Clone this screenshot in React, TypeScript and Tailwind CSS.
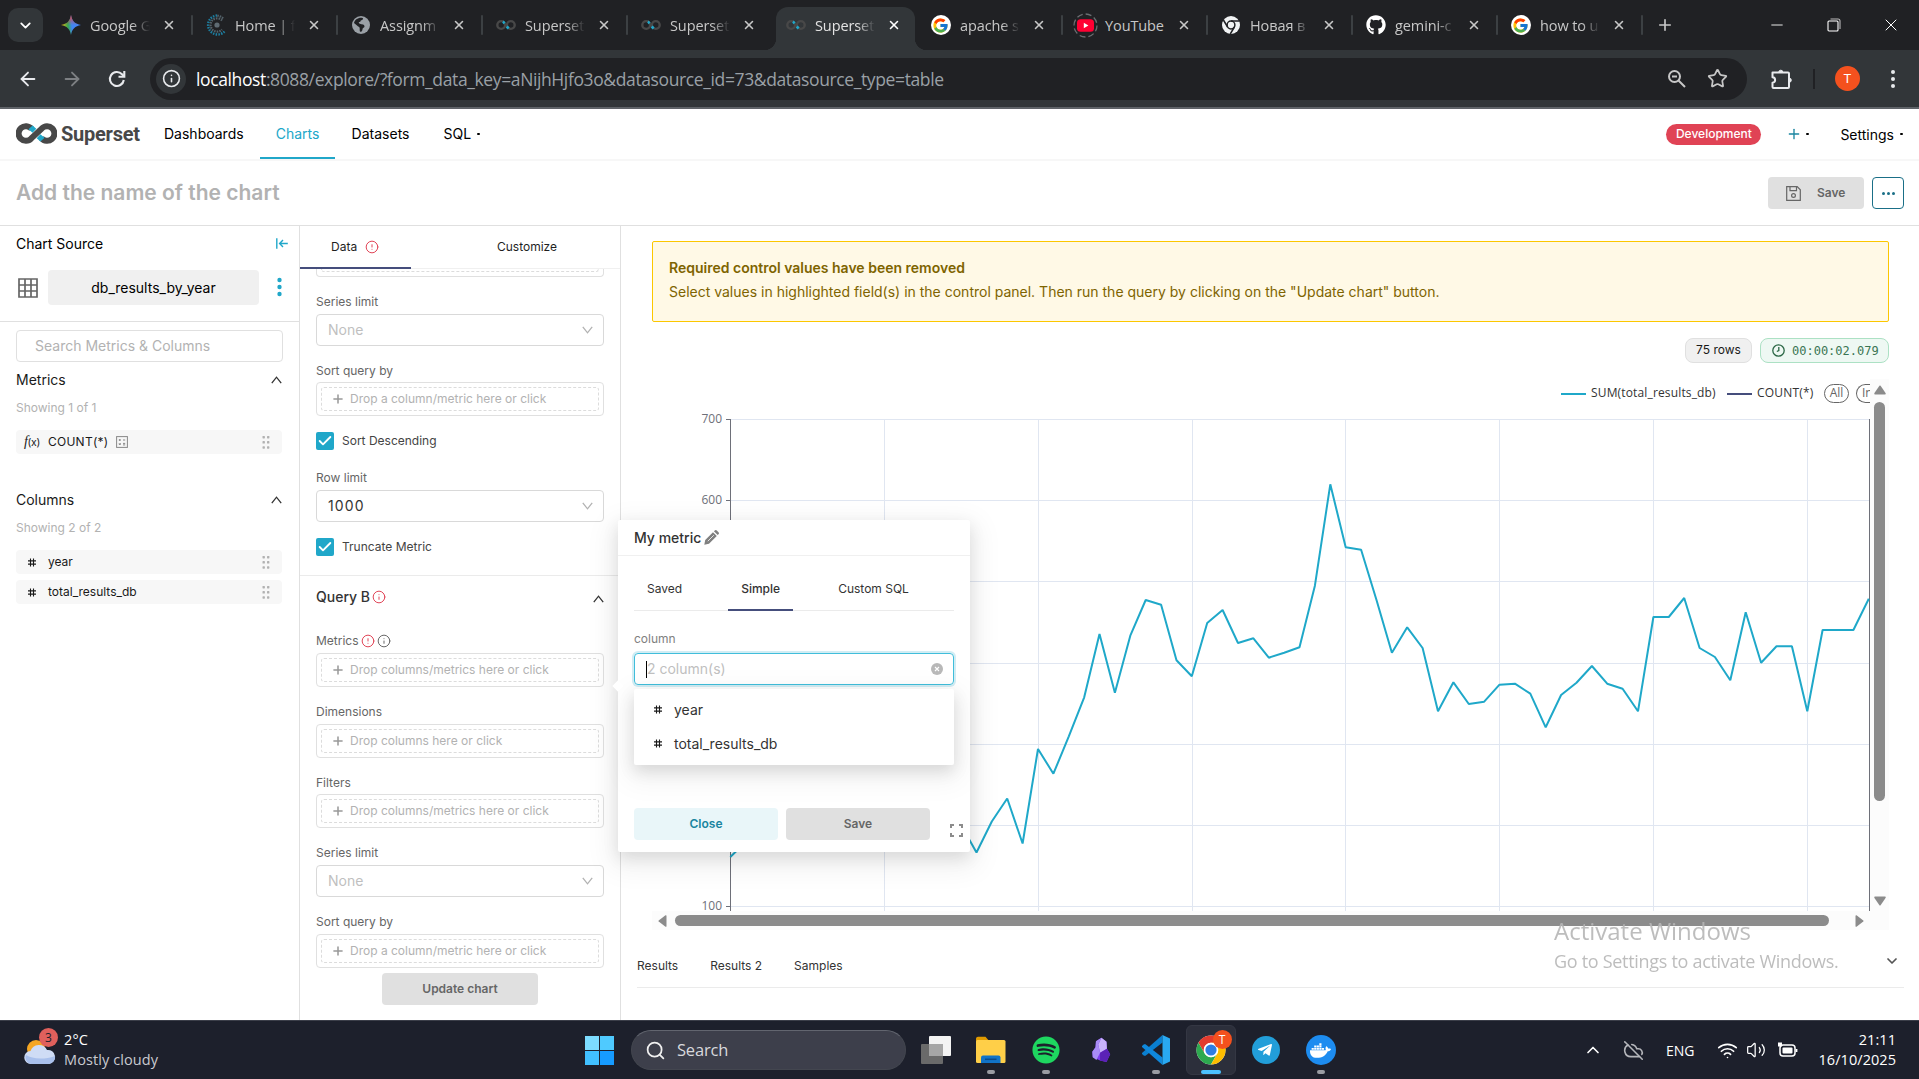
import React from "react";
import {
  ChevronDown,
  ChevronUp,
  ArrowLeft,
  ArrowRight,
  Info,
  X,
  Plus,
  Star,
  Minus,
  CircleAlert,
  CloudOff,
  Wifi,
  Volume2,
  Search,
  Check,
} from "lucide-react";
import { FcGoogle } from "react-icons/fc";
import { FaGithub, FaSpotify, FaDocker, FaTelegramPlane } from "react-icons/fa";

const SEGOE = "font-['Open_Sans','Noto_Sans',sans-serif]";

/* ---------- small drawings ---------- */

function SupersetMark() {
  return (
    <svg width="41" height="21" viewBox="0 0 41 21" fill="none" className="shrink-0">
      <path
        d="M15.6 5.9A7.3 7.3 0 1 0 15.3 15.4L25.7 5.6A7.3 7.3 0 1 1 25.4 15.1"
        stroke="#484848"
        strokeWidth="6"
      />
      <path d="M16.600 2.400 20.300 5.800 16.600 9.700 12.400 6.300ZM24.400 18.600 20.700 15.200 24.400 11.300 28.600 14.700Z" fill="#20a7c9" />
    </svg>
  );
}

function SupersetFavicon() {
  return (
    <svg width="20" height="12" viewBox="0 0 20 12" fill="none">
      <circle cx="5.2" cy="6" r="3.9" stroke="#484848" strokeWidth="2.4" />
      <circle cx="14.8" cy="6" r="3.9" stroke="#484848" strokeWidth="2.4" />
      <path d="M7.6 1.6 9.6 3.4 7.6 5.2 6.2 3.4ZM11.6 6.4 13.6 8.4 11.6 10.4 9.8 8.4Z" fill="#20a7c9" />
    </svg>
  );
}

function GeminiIcon() {
  return (
    <svg width="20" height="20" viewBox="0 0 20 20">
      <defs>
        <linearGradient id="gem" x1="0" y1="0.6" x2="1" y2="0.5">
          <stop offset="0" stopColor="#fbbc04" />
          <stop offset="0.35" stopColor="#34a853" />
          <stop offset="0.55" stopColor="#4285f4" />
          <stop offset="1" stopColor="#4285f4" />
        </linearGradient>
        <linearGradient id="gemtop" x1="0" y1="0" x2="0" y2="1">
          <stop offset="0" stopColor="#ea4335" />
          <stop offset="0.5" stopColor="#ea4335" stopOpacity="0" />
        </linearGradient>
      </defs>
      <path d="M10 0C11 6 14 9 20 10 14 11 11 14 10 20 9 14 6 11 0 10 6 9 9 6 10 0Z" fill="url(#gem)" />
      <path d="M10 0C11 6 14 9 20 10 14 11 11 14 10 20 9 14 6 11 0 10 6 9 9 6 10 0Z" fill="url(#gemtop)" />
    </svg>
  );
}

function DottedC() {
  return (
    <svg width="22" height="22" viewBox="0 0 22 22" fill="none">
      <circle cx="12" cy="11" r="2.6" fill="#5f6b73" />
      <path d="M12 1.500A9.500 9.500 0 1 0 19.500 17.500" stroke="#1d7ea0" strokeWidth="2.400" strokeDasharray="1.500 1.200" />
      <path d="M18 4.500A9.500 9.500 0 0 0 12 1.500M17 6.500A6.600 6.600 0 1 0 17 15.500" stroke="#55636b" strokeWidth="2.200" strokeDasharray="1.500 1" />
    </svg>
  );
}

function GlobeIcon() {
  return (
    <svg width="18" height="18" viewBox="0 0 18 18">
      <circle cx="9" cy="9" r="9" fill="#9aa0a6" />
      <path
        d="M9.800 1.800C12 2 11 4 9.500 4.200S9 6 7.500 6 7 8.200 9.500 8.200s3 1 3 2.300-2 1.300-2 2.700-1 2.600-2 2.600-.8-2.300-.8-3.600-1.700-1.300-2.700-2.600L2 7C2.600 4 6 1.400 9.800 1.800Z"
        fill="#202124"
      />
    </svg>
  );
}

function YouTubeIcon() {
  return (
    <svg width="25" height="25" viewBox="0 0 25 25" fill="none">
      <circle cx="12.5" cy="12.5" r="11.5" stroke="#6b6e72" strokeWidth="1.3" strokeDasharray="6 3" />
      <rect x="4" y="6.3" width="17" height="12.4" rx="3.5" fill="#ff0033" />
      <path d="M10.8 9.800v5.400l4.600-2.700Z" fill="#fff" />
    </svg>
  );
}

function ChromeMono() {
  return (
    <svg width="18" height="18" viewBox="0 0 18 18">
      <circle cx="9" cy="9" r="9" fill="#f1f3f4" />
      <circle cx="9" cy="9" r="3.9" fill="#f1f3f4" stroke="#202124" strokeWidth="1.5" />
      <path d="M9 5h8.500M5.600 11 1.400 4M12.400 11 8.300 18" stroke="#202124" strokeWidth="1.5" />
    </svg>
  );
}

function GoogleFav() {
  return (
    <span className="flex h-5 w-5 items-center justify-center rounded-full bg-white">
      <FcGoogle size={17} />
    </span>
  );
}

function ChromeColor() {
  return (
    <svg width="30" height="30" viewBox="0 0 30 30">
      <circle cx="15" cy="15" r="14.5" fill="#fff" />
      <path d="M2.440 7.750A14.500 14.500 0 0 1 27.560 7.750H15A7.250 7.250 0 0 0 8.700 18.600Z" fill="#e33b2e" />
      <path d="M2.440 7.750A14.500 14.500 0 0 0 15 29.500L21.280 18.620A7.250 7.250 0 0 1 8.720 18.620Z" fill="#2da94f" />
      <path d="M27.560 7.750A14.500 14.500 0 0 1 15 29.500L21.280 18.620A7.250 7.250 0 0 0 15 7.750Z" fill="#fdbd00" />
      <circle cx="15" cy="15" r="7.2" fill="#fff" />
      <circle cx="15" cy="15" r="5.6" fill="#2f7de1" />
    </svg>
  );
}

function VsCode() {
  return (
    <svg width="30" height="30" viewBox="0 0 30 30">
      <path d="M21.500 7.500 4.500 20.700 3 20.700 1 19V18L21.500 0Z" fill="#0a7fd0" />
      <path d="M1 12 1 11 3 9.300H4.500L21.500 22.500V30Z" fill="#0f88dc" />
      <path d="M21.500 0 29 3.600V26.400L21.500 30Z" fill="#29a9f2" />
    </svg>
  );
}

function Obsidian() {
  return (
    <svg width="22" height="28" viewBox="0 0 24 28">
      <path d="M12.500.5 18 5l.5 7.500 3.500 6-4 8.500-7-1.500L3 22l-.5-6L6 11l.5-6.500Z" fill="#7c3aed" />
      <path d="M12.500.5 18 5l.5 7.500L11 17 9 8Z" fill="#c9b3fb" />
      <path d="M6.500 4.500 12.500.5 9 8l2 9-4 8-4-3-.5-6L6 11Z" fill="#a88bf5" />
      <path d="m11 17 7.500-4.500 3.500 6-4 8.500-7-1.500Z" fill="#5b21b6" />
    </svg>
  );
}

function Folder() {
  return (
    <svg width="31" height="28" viewBox="0 0 31 28">
      <path d="M1 2.500A2 2 0 0 1 3 .7h7.500l3 3.500v3H1Z" fill="#e09a00" />
      <rect x="1" y="4" width="29.5" height="23" rx="1.5" fill="#ffcf48" />
      <path d="M6 27v-5.500a2 2 0 0 1 2-2h15.500a2 2 0 0 1 2 2V27Z" fill="#1173c7" />
      <path d="M10 23.300h11.500" stroke="#0b4b8a" strokeWidth="1.5" />
    </svg>
  );
}

function Puzzle() {
  return (
    <svg width="22" height="22" viewBox="0 0 22 22" fill="none" stroke="#e8eaed" strokeWidth="2" strokeLinejoin="round">
      <path d="M2.500 4.500H18a1 1 0 0 1 1 1V19a1 1 0 0 1-1 1H3.500a1 1 0 0 1-1-1v-4.300c3.500-.3 3.500-5.100 0-5.400Z" />
      <path d="M8.800 4.200a2 2 0 0 1 4 0ZM19.300 10.200a2 2 0 0 1 0 4Z" fill="#e8eaed" strokeWidth="1" />
    </svg>
  );
}

function DragDots() {
  return (
    <svg width="8" height="13" viewBox="0 0 8 13" fill="#b2b2b2">
      {[1.2, 6.3, 11.5].map((y) => (
        <g key={y}>
          <rect x="0.5" y={y - 1.2} width="2.4" height="2.4" rx=".6" />
          <rect x="5" y={y - 1.2} width="2.4" height="2.4" rx=".6" />
        </g>
      ))}
    </svg>
  );
}

function HashIcon() {
  return (
    <svg width="8" height="9" viewBox="0 0 8 9" stroke="#1a1a1a" strokeWidth="1.1" fill="none">
      <path d="M2.500.5v8M5.500.5v8M0 2.900h8M0 6.100h8" />
    </svg>
  );
}

function Caret({ down = false, color = "#333" }: { down?: boolean; color?: string }) {
  return (
    <svg width="11" height="8" viewBox="0 0 11 8" fill="none" stroke={color} strokeWidth="1.3">
      <path d={down ? "M.8.8 5.500 6.800 10.200.8" : "M.8 7.200 5.500 1.200 10.200 7.200"} />
    </svg>
  );
}

/* ---------- browser chrome ---------- */

const TABS: { title: string; icon: React.ReactNode; active?: boolean; noDivider?: boolean }[] = [
  { title: "Google G", icon: <GeminiIcon /> },
  { title: "Home | f", icon: <DottedC /> },
  { title: "Assignm", icon: <GlobeIcon /> },
  { title: "Superset", icon: <SupersetFavicon /> },
  { title: "Superset", icon: <SupersetFavicon />, noDivider: true },
  { title: "Superset", icon: <SupersetFavicon />, active: true, noDivider: true },
  { title: "apache s", icon: <GoogleFav /> },
  { title: "YouTube", icon: <YouTubeIcon /> },
  { title: "Новая в", icon: <ChromeMono /> },
  { title: "gemini-c", icon: <FaGithub size={20} color="#fff" /> },
  { title: "how to u", icon: <GoogleFav /> },
];

function TabStrip() {
  return (
    <div className="flex h-[50px] bg-[#202124]">
      <div className="flex w-12 shrink-0 items-center pl-2">
        <div className="flex h-[34px] w-[35px] items-center justify-center rounded-[10px] bg-[#323639]">
          <ChevronDown size={17} color="#fff" strokeWidth={2.5} />
        </div>
      </div>
      {TABS.map((t, i) => (
        <div key={i} className="flex h-[50px] w-[145px] shrink-0 items-end">
          <div
            className={
              t.active
                ? "relative ml-[3px] mr-[3px] h-[43px] w-[139px] rounded-t-[12px] bg-[#323639]"
                : "relative ml-[3px] mr-[3px] h-[43px] w-[139px]"
            }
          >
            {t.active && (
              <>
                <span className="absolute -left-3 bottom-0 h-3 w-3 bg-[radial-gradient(circle_at_0_0,#202124_12px,#323639_12.5px)]" />
                <span className="absolute -right-3 bottom-0 h-3 w-3 bg-[radial-gradient(circle_at_100%_0,#202124_12px,#323639_12.5px)]" />
              </>
            )}
            <div className="flex h-9 items-center">
              <span className="flex w-[39px] items-center justify-center">{t.icon}</span>
              <span
                className={
                  (t.active ? "text-[#e3e3e3]" : "text-[#c7c7c7]") +
                  (t.title === "YouTube" ? "" : " [mask-image:linear-gradient(to_right,#000_70%,transparent)]") +
                  " mt-[2px] h-5 w-[60px] whitespace-nowrap text-[14.5px] leading-5 tracking-[-0.1px] " +
                  SEGOE
                }
              >
                {t.title}
              </span>
              <span className="flex w-[38px] items-center justify-center">
                <X size={14} color={t.active ? "#fff" : "#c7c7c7"} strokeWidth={2.7} />
              </span>
            </div>
          </div>
          {!t.noDivider && <span className="-ml-[1px] mb-[15px] h-5 w-[2px] shrink-0 rounded bg-[#3c4043]" />}
        </div>
      ))}
      <div className="flex w-[43px] items-center justify-center">
        <Plus size={18} color="#c7c7c7" strokeWidth={2.2} />
      </div>
      <div className="ml-auto flex items-center">
        <div className="flex w-[57px] justify-center">
          <Minus size={18} color="#fff" strokeWidth={1.2} />
        </div>
        <div className="flex w-[57px] justify-center">
          <svg width="14" height="14" viewBox="0 0 14 14" fill="none" stroke="#fff" strokeWidth="1.1">
            <rect x="1" y="3" width="10" height="10" rx="1" />
            <path d="M3.500 1H11a2 2 0 0 1 2 2v8" stroke="#bbb" />
          </svg>
        </div>
        <div className="flex w-[57px] justify-center">
          <X size={20} color="#fff" strokeWidth={1.2} />
        </div>
      </div>
    </div>
  );
}

function AddressBar() {
  return (
    <div className="flex h-[59px] items-center border-b-2 border-[#5f6368] bg-[#323639] pl-[17px]">
      <ArrowLeft size={22} color="#e8eaed" strokeWidth={2} />
      <ArrowRight size={22} color="#7d8083" strokeWidth={2} className="ml-[22px]" />
      <svg width="20" height="20" viewBox="0 0 20 20" fill="none" stroke="#e8eaed" strokeWidth="2.1" className="ml-[24px]">
        <path d="M16.800 11A7 7 0 1 1 15 5.200L17 7.300" />
        <path d="M17.300 2v5.800h-5.800" />
      </svg>
      <div className="ml-[23px] flex h-[42px] w-[1597px] items-center rounded-full bg-[#202124]">
        <span className="ml-[6px] flex h-[30px] w-[30px] items-center justify-center rounded-full bg-[#323639]">
          <Info size={19} color="#e8eaed" strokeWidth={2} />
        </span>
        <span
          className={"ml-[10px] mt-[2px] whitespace-nowrap text-[17.5px] tracking-[-0.38px] text-[#9aa0a6] " + SEGOE}
        >
          <span className="text-white">localhost</span>
          :8088/explore/?form_data_key=aNijhHjfo3o&amp;datasource_id=73&amp;datasource_type=table
        </span>
        <div className="ml-auto flex items-center gap-[20px] pr-[19px]">
          <svg width="20" height="20" viewBox="0 0 20 20" fill="none" stroke="#c7c7c7" strokeWidth="2">
            <circle cx="7.500" cy="7.500" r="5.500" />
            <path d="M11.500 11.500 18 18M5 7.500h5" />
          </svg>
          <Star size={21} color="#c7c7c7" strokeWidth={2} />
        </div>
      </div>
      <div className="ml-[23px] flex items-center">
        <Puzzle />
        <span className="ml-[21px] h-5 w-[2px] bg-[#202124]" />
        <span className="ml-5 flex h-[25px] w-[25px] items-center justify-center rounded-full bg-[#f4511e] font-['Roboto',sans-serif] text-[13px] text-white">
          T
        </span>
        <svg width="6" height="20" viewBox="0 0 6 20" fill="#e8eaed" className="ml-[30px]">
          <circle cx="3" cy="3" r="2" />
          <circle cx="3" cy="10" r="2" />
          <circle cx="3" cy="17" r="2" />
        </svg>
      </div>
    </div>
  );
}

/* ---------- application header ---------- */

function Navbar() {
  return (
    <div className="flex h-[52px] items-stretch border-b-2 border-[#f7f7f7] bg-white text-[14px] text-black">
      <div className="flex w-[148px] items-center pl-4 pb-px">
        <SupersetMark />
        <span className="ml-1 mt-px font-['Roboto',sans-serif] text-[20px] font-bold leading-5 tracking-[-0.25px] text-[#484848]">
          Superset
        </span>
      </div>
      <div className="flex items-center px-4 pb-px">Dashboards</div>
      <div className="flex w-[75px] items-center justify-center border-b-2 border-[#20a7c9] pt-px pl-px text-[#20a7c9]">
        Charts
      </div>
      <div className="ml-[17px] flex items-center pb-px">Datasets</div>
      <div className="ml-[34px] flex items-center pb-px">
        SQL<span className="ml-[6px] h-[2px] w-[3px] rounded-full bg-black" />
      </div>
      <div className="ml-auto flex items-center pr-4">
        <span className="flex h-[21px] w-[95px] items-center justify-center rounded-full bg-[#e04355] text-[12px] font-medium text-white">
          Development
        </span>
        <Plus size={16} color="#1a85a0" strokeWidth={2} className="ml-[25px]" />
        <span className="ml-[4px] h-[2px] w-[3px] rounded-full bg-black" />
        <span className="ml-[31px]">Settings</span>
        <span className="ml-[6px] h-[2px] w-[3px] rounded-full bg-black" />
      </div>
    </div>
  );
}

function TitleBar() {
  return (
    <div className="flex h-[65px] items-center border-b border-[#e0e0e0] bg-white pl-4 pr-[15px]">
      <span className="pb-px text-[21px] font-semibold leading-none text-[#b2b2b2]">Add the name of the chart</span>
      <div className="ml-auto flex h-8 w-24 items-center rounded bg-[#e0e0e0] pl-[18px] text-[12px] font-semibold text-[#666]">
        <svg width="15" height="15" viewBox="0 0 15 15" fill="none" stroke="#666" strokeWidth="1.2">
          <path d="M.7.7h10.500l3.100 3.100v10.500H.7ZM4 .7v4h6.500v-4" />
          <circle cx="7.500" cy="9.500" r="1.900" />
        </svg>
        <span className="ml-4">Save</span>
      </div>
      <div className="ml-2 flex h-8 w-8 items-center justify-center gap-[2px] rounded border border-[#1a6f87]">
        <span className="h-[3px] w-[3px] rounded-full bg-[#1a6f87]" />
        <span className="h-[3px] w-[3px] rounded-full bg-[#1a6f87]" />
        <span className="h-[3px] w-[3px] rounded-full bg-[#1a6f87]" />
      </div>
    </div>
  );
}

/* ---------- data source panel ---------- */

function FieldRow({ icon, label, extra }: { icon: React.ReactNode; label: React.ReactNode; extra?: React.ReactNode }) {
  return (
    <div className="flex h-6 w-[266px] items-center rounded bg-[#f7f7f7] text-[12px] text-[#1a1a1a]">
      <span className="flex w-8 items-center justify-center">{icon}</span>
      <span>{label}</span>
      {extra}
      <span className="ml-auto mr-3">
        <DragDots />
      </span>
    </div>
  );
}

function SectionHeading({ title, note }: { title: string; note: string }) {
  return (
    <>
      <div className="flex h-[30px] items-center justify-between pr-px text-[14px] text-[#1a1a1a]">
        <span className="pb-px">{title}</span>
        <Caret />
      </div>
      <div className="mt-[4px] h-[18px] text-[12px] leading-[18px] text-[#b2b2b2]">{note}</div>
    </>
  );
}

function SourcePanel() {
  return (
    <div className="flex w-[300px] shrink-0 flex-col border-r border-[#e0e0e0] bg-white">
      <div className="h-24 border-b border-[#e0e0e0] pl-4">
        <div className="flex h-9 items-center pr-[11px] text-[14px] text-black">
          <span className="pb-px">Chart Source</span>
          <svg width="12" height="11" viewBox="0 0 12 11" fill="none" stroke="#20a7c9" strokeWidth="1.4" className="mb-[2px] ml-auto">
            <path d="M.8.300v10.400M11.800 5.500H4M7 2 3.600 5.500 7 9" />
          </svg>
        </div>
        <div className="mt-2 flex h-[35px] items-center">
          <svg width="20" height="20" viewBox="0 0 20 20" fill="none" stroke="#666" strokeWidth="1.7" className="ml-[2px]">
            <path d="M1 1h18v18H1ZM1 7h18M1 13h18M7 1v18M13 1v18" />
          </svg>
          <span className="ml-[10px] flex h-[35px] w-[211px] items-center justify-center rounded bg-[#f0f0f0] text-[14px] text-black">
            db_results_by_year
          </span>
          <svg width="5" height="20" viewBox="0 0 5 20" fill="#20a7c9" className="mb-px ml-[18px]">
            <circle cx="2.500" cy="3" r="2.200" />
            <circle cx="2.500" cy="10" r="2.200" />
            <circle cx="2.500" cy="17" r="2.200" />
          </svg>
        </div>
      </div>
      <div className="pl-4 pr-4 pt-2">
        <div className="flex h-8 w-[267px] items-center rounded border border-[#e0e0e0] pb-px pl-[18px] text-[14px] text-[#b2b2b2]">
          Search Metrics &amp; Columns
        </div>
        <div className="mt-[3px]">
          <SectionHeading title="Metrics" note="Showing 1 of 1" />
        </div>
        <div className="mt-[13px]">
          <FieldRow
            icon={
              <span className="whitespace-nowrap pb-[2px] font-['Inter',sans-serif] text-[10.5px] tracking-[-0.3px]">
                <i className="font-['Liberation_Serif',serif] text-[14px]">f</i>(x)
              </span>
            }
            label={<span className="tracking-[0.25px]">COUNT(*)</span>}
            extra={
              <svg width="12" height="12" viewBox="0 0 12 12" fill="none" stroke="#888" strokeWidth="1" className="ml-2">
                <rect x=".6" y=".6" width="10.800" height="10.800" />
                <path d="M2.800 4h2M3.800 3v2M7 4h2.200M2.900 7.200l1.800 1.800M4.700 7.200 2.900 9M7 7.400h2.200M7 8.900h2.200" />
              </svg>
            }
          />
        </div>
        <div className="mt-[31px]">
          <SectionHeading title="Columns" note="Showing 2 of 2" />
        </div>
        <div className="mt-[13px] flex flex-col gap-[6px]">
          <FieldRow icon={<HashIcon />} label="year" />
          <FieldRow icon={<HashIcon />} label="total_results_db" />
        </div>
      </div>
    </div>
  );
}

/* ---------- control panel ---------- */

function Label({ children }: { children: React.ReactNode }) {
  return <div className="flex h-5 items-center text-[12px] text-[#666]">{children}</div>;
}

function DropBox({ text }: { text: string }) {
  return (
    <div className="h-[34px] w-[288px] rounded border border-[#e0e0e0] p-1">
      <div className="flex h-full items-center rounded-[3px] border border-dashed border-[#dcdcdc] pl-[9px] text-[12px] text-[#b2b2b2]">
        <Plus size={14} color="#999" strokeWidth={2.6} />
        <span className="ml-[5px] pb-px">{text}</span>
      </div>
    </div>
  );
}

function SelectBox({ text, filled = false }: { text: string; filled?: boolean }) {
  return (
    <div className="flex h-8 w-[288px] items-center justify-between rounded border border-[#d9d9d9] pl-[11px] pr-[10px] text-[14px]">
      <span className={filled ? "pb-px tracking-[1.1px] text-[#333]" : "pb-px text-[#bfbfbf]"}>{text}</span>
      <Caret down color="#b2b2b2" />
    </div>
  );
}

function CheckRow({ text }: { text: string }) {
  return (
    <div className="flex h-[18px] items-center text-[12px] text-[#444]">
      <span className="flex h-[18px] w-[18px] items-center justify-center rounded-[2px] bg-[#20a7c9]">
        <Check size={16} color="#fff" strokeWidth={2.8} />
      </span>
      <span className="ml-2">{text}</span>
    </div>
  );
}

function ControlPanel() {
  return (
    <div className="flex w-[321px] shrink-0 flex-col border-r border-[#e0e0e0] bg-white">
      <div className="flex h-[43px] border-b border-[#f0f0f0] text-[12px] text-[#1f1f1f]">
        <div className="-mb-px flex w-[111px] items-center border-b-2 border-[#454e7c] pl-[31px]">
          Data
          <CircleAlert size={14} color="#e04355" strokeWidth={1.7} className="ml-[8px]" />
        </div>
        <div className="ml-[86px] flex items-center">Customize</div>
      </div>
      <div className="flex flex-1 flex-col pl-4">
        <div className="h-2 w-[288px] rounded-b border border-t-0 border-[#e0e0e0] px-1 pb-1">
          <div className="h-[3px] rounded-b-[3px] border border-t-0 border-dashed border-[#dcdcdc]" />
        </div>
        <div className="mt-[15px]"><Label>Series limit</Label></div>
        <div className="mt-[2px]"><SelectBox text="None" /></div>
        <div className="mt-[15px]"><Label>Sort query by</Label></div>
        <div className="mt-px"><DropBox text="Drop a column/metric here or click" /></div>
        <div className="mt-4"><CheckRow text="Sort Descending" /></div>
        <div className="mt-[18px]"><Label>Row limit</Label></div>
        <div className="mt-[2px]"><SelectBox text="1000" filled /></div>
        <div className="mt-4"><CheckRow text="Truncate Metric" /></div>
        <div className="-ml-4 mt-[19px] border-t border-[#ebebeb]" />
        <div className="flex h-[42px] items-center pr-4 text-[14px] font-medium text-[#333]">
          <span className="pb-px">Query B</span>
          <Info size={14} color="#e04355" strokeWidth={1.7} className="mb-px ml-[2px]" />
          <span className="ml-auto mt-1"><Caret /></span>
        </div>
        <div className="mt-[13px]">
          <Label>
            Metrics
            <CircleAlert size={14} color="#e04355" strokeWidth={1.7} className="ml-[2px]" />
            <Info size={14} color="#666" strokeWidth={1.7} className="ml-[2px]" />
          </Label>
        </div>
        <div className="mt-[2px]"><DropBox text="Drop columns/metrics here or click" /></div>
        <div className="mt-[15px]"><Label>Dimensions</Label></div>
        <div className="mt-[2px]"><DropBox text="Drop columns here or click" /></div>
        <div className="mt-[15px]"><Label>Filters</Label></div>
        <div className="mt-px"><DropBox text="Drop columns/metrics here or click" /></div>
        <div className="mt-[15px]"><Label>Series limit</Label></div>
        <div className="mt-[2px]"><SelectBox text="None" /></div>
        <div className="mt-[15px]"><Label>Sort query by</Label></div>
        <div className="mt-[2px]"><DropBox text="Drop a column/metric here or click" /></div>
        <div className="ml-[66px] mt-[5px] flex h-8 w-[156px] items-center justify-center rounded bg-[#e0e0e0] text-[12px] font-semibold text-[#666]">
          Update chart
        </div>
      </div>
    </div>
  );
}

/* ---------- chart ---------- */

// Vertical position of each yearly point, from the first year to the last.
const POINTS = [
  857, 842, 840, 838, 836, 840, 842, 835, 836, 838, 840, 835, 836, 838, 842, 825, 852.5, 821.5, 798.5, 843.5, 749,
  773.7, 736.3, 697.3, 634, 692.7, 635.7, 600, 604.7, 660.3, 676.3, 623, 610, 643, 638.3, 657.7, 652.7, 647.3, 585.7,
  484.3, 547.3, 549.7, 600, 652.7, 627.3, 648, 711.3, 682.3, 704, 701.7, 684.7, 683.7, 693.7, 727.3, 695, 682.7, 666,
  683.7, 688.7, 711.3, 617, 617, 598, 648, 657, 680.3, 612.3, 662.7, 646.3, 646.3, 711.3, 630, 630, 630, 598.7,
];

const H_LINES = [419.5, 500.5, 581.5, 663.5, 744.5, 825.5, 906.5];
const V_LINES = [884.5, 1038.5, 1192.5, 1345.5, 1499.5, 1653.5, 1807.5];
const Y_LABELS = [
  { y: 419, text: "700" },
  { y: 500, text: "600" },
  { y: 906, text: "100" },
];

function LineChart() {
  const line = POINTS.map((y, i) => `${(730.3 + i * 15.385).toFixed(1)},${y}`).join(" ");
  return (
    <svg width="1218" height="500" viewBox="652 411 1218 500" className="block">
      {H_LINES.map((y) => (
        <g key={y}>
          <path d={`M731 ${y}H1869`} stroke="#e0e6f1" />
          <path d={`M726 ${y}H731`} stroke="#6e7079" />
        </g>
      ))}
      {Y_LABELS.map((l) => (
        <text
          key={l.text}
          x="722"
          y={l.y + 3.5}
          textAnchor="end"
          fill="#6e7079"
          className="font-['Open_Sans','Noto_Sans',sans-serif] text-[12px]"
        >
          {l.text}
        </text>
      ))}
      {V_LINES.map((x) => (
        <path key={x} d={`M${x} 419V911`} stroke="#e0e6f1" />
      ))}
      <path d="M730.500 419V911M1869.500 419V911" stroke="#6e7079" />
      <polyline points={line} fill="none" stroke="#1fa8c9" strokeWidth="2" strokeLinejoin="bevel" />
    </svg>
  );
}

function Legend() {
  return (
    <div className={"flex h-8 items-center overflow-hidden whitespace-nowrap pl-[909px] text-[12px] text-[#333] " + SEGOE}>
      <span className="mt-[-3px] h-[2px] w-[25px] shrink-0 bg-[#1fa8c9]" />
      <span className="-mt-1 ml-[5px] w-[125px] shrink-0 tracking-[0.15px]">SUM(total_results_db)</span>
      <span className="mt-[-3px] ml-[11px] h-[2px] w-[25px] shrink-0 bg-[#454e7c]" />
      <span className="-mt-1 ml-[5px] w-[56px] shrink-0 tracking-[0.2px]">COUNT(*)</span>
      <span className="-mt-[3px] ml-[11px] flex h-[19px] w-[25px] shrink-0 items-center justify-center rounded-full border border-[#666] pb-px text-[#666]">
        All
      </span>
      <span className="-mt-[3px] ml-[7px] flex h-[19px] w-[25px] shrink-0 items-center rounded-l-full border border-r-0 border-[#666] pb-px pl-[5px] text-[#666]">
        In
      </span>
    </div>
  );
}

function ChartArea() {
  return (
    <div className="flex flex-1 flex-col bg-white">
      <div className="ml-[31px] mt-[15px] flex h-[81px] w-[1237px] flex-col rounded-[2px] border border-[#fcc700] bg-[#fff9e6] pl-4 pt-[15px] text-[14px] text-[#7e6400]">
        <div className="h-[22px] font-semibold leading-[22px]">Required control values have been removed</div>
        <div className="mt-[2px] h-[22px] leading-[22px]">
          Select values in highlighted field(s) in the control panel. Then run the query by clicking on the "Update
          chart" button.
        </div>
      </div>
      <div className="mt-4 flex justify-end gap-2 pr-[30px]">
        <span className="flex h-[25px] w-[67px] items-center justify-center rounded-lg border border-[#e0e0e0] bg-[#f0f0f0] pb-px text-[12px] text-[#1a1a1a]">
          75 rows
        </span>
        <span className="flex h-[25px] w-[129px] items-center rounded-lg border border-[#ace1c4] bg-[#eef8f3] pl-[11px] font-['DejaVu_Sans_Mono',monospace] text-[12px] text-[#3a7554]">
          <svg width="13" height="13" viewBox="0 0 13 13" fill="none" stroke="#2b6745" strokeWidth="1.3" className="mr-[7px]">
            <circle cx="6.500" cy="6.500" r="5.700" />
            <path d="M6.800 3v3.500l-2 1" />
          </svg>
          00:00:02.079
        </span>
      </div>
      <div className="ml-[31px] mt-4 flex h-[551px] w-[1237px] bg-[#fcfcfc]">
        <div className="w-[1218px]">
          <div className="bg-white">
            <Legend />
            <LineChart />
          </div>
          <div className="flex h-[19px] items-center pl-[6px]">
            <svg width="9" height="12" viewBox="0 0 9 12" fill="#8b8b8b">
              <path d="M8.500.8v10.400a.8.8 0 0 1-1 .5L.7 6.600a.8.8 0 0 1 0-1.200L7.500.3a.8.8 0 0 1 1 .5Z" />
            </svg>
            <span className="ml-2 h-[11px] w-[1154px] rounded-full bg-[#8b8b8b]" />
            <svg width="9" height="12" viewBox="0 0 9 12" fill="#8b8b8b" className="ml-[26px]">
              <path d="M.5.8v10.400a.8.8 0 0 0 1 .5l6.800-5.100a.8.8 0 0 0 0-1.200L1.500.3a.8.8 0 0 0-1 .5Z" />
            </svg>
          </div>
        </div>
        <div className="flex w-[19px] flex-col items-center pt-[6px]">
          <svg width="12" height="10" viewBox="0 0 12 9" preserveAspectRatio="none" fill="#8b8b8b">
            <path d="M.8 8.500h10.400a.8.8 0 0 0 .5-1L6.600.7a.8.8 0 0 0-1.200 0L.3 7.500a.8.8 0 0 0 .5 1Z" />
          </svg>
          <span className="mt-[7px] h-[399px] w-[11px] rounded-full bg-[#8b8b8b]" />
          <svg width="12" height="10" viewBox="0 0 12 9" preserveAspectRatio="none" fill="#8b8b8b" className="mt-[95px]">
            <path d="M.8.5h10.400a.8.8 0 0 1 .5 1L6.600 8.300a.8.8 0 0 1-1.200 0L.3 1.500a.8.8 0 0 1 .5-1Z" />
          </svg>
        </div>
      </div>
      <div className="ml-4 mr-[15px] flex h-[58px] items-center gap-8 border-b border-[#ebebeb] pt-[14px] text-[12px] text-[#333]">
        <span>Results</span>
        <span>Results 2</span>
        <span>Samples</span>
        <ChevronDown size={16} color="#555" strokeWidth={2.6} className="mb-[9px] ml-auto mr-[4px]" />
      </div>
    </div>
  );
}

/* ---------- metric popover ---------- */

function MetricPopover() {
  return (
    <div className="absolute left-[618px] top-[520px] h-[332px] w-[352px] rounded-[2px] bg-white shadow-[0_6px_16px_rgba(0,0,0,0.10),0_9px_28px_8px_rgba(0,0,0,0.06)]">
      <span className="absolute -left-[4px] top-[162px] h-2 w-2 rotate-45 bg-white" />
      <div className="flex h-9 items-center border-b border-[#f0f0f0] pl-4 text-[14px] font-medium text-[#333]">
        My metric
        <svg width="15" height="15" viewBox="0 0 15 15" fill="#808080" className="ml-[3px]">
          <path d="M.3 14.700 1.200 10 9 2.200l3.800 3.800-7.800 7.800ZM9.900 1.300l.9-.8a1.400 1.400 0 0 1 2 0l1.700 1.700a1.400 1.400 0 0 1 0 2l-.8.9Z" />
          <path d="M3.800 11.200 9.800 5.200" stroke="#fff" strokeWidth=".8" />
        </svg>
      </div>
      <div className="px-4">
        <div className="mt-[11px] flex h-11 border-b border-[#ebebeb] text-[12px] text-[#333]">
          <span className="flex items-center pl-[13px]">Saved</span>
          <span className="-mb-px ml-[46px] flex w-[65px] items-center justify-center border-b-2 border-[#454e7c] pt-[1px] font-medium">
            Simple
          </span>
          <span className="ml-[45px] flex items-center">Custom SQL</span>
        </div>
        <div className="mt-[18px] text-[12px] leading-5 text-[#808080]">column</div>
        <div className="mt-1 flex h-8 items-center rounded border border-[#41bedb] pl-[11px] pr-[10px] text-[14px] text-[#bfbfbf] shadow-[0_0_0_2px_#d2edf4]">
          <span className="h-[17px] w-px bg-black" />
          <span className="pb-px">2 column(s)</span>
          <svg width="12" height="12" viewBox="0 0 12 12" className="ml-auto">
            <circle cx="6" cy="6" r="6" fill="#b8b8b8" />
            <path d="m4 4 4 4M8 4 4 8" stroke="#fff" strokeWidth="1.1" />
          </svg>
        </div>
        <div className="mt-1 h-[76px] rounded-[2px] bg-white py-[3px] text-[14px] text-[#333] shadow-[0_6px_16px_rgba(0,0,0,0.12),0_9px_28px_8px_rgba(0,0,0,0.05)]">
          <div className="flex h-[34px] items-center pl-5">
            <HashIcon />
            <span className="ml-[12px]">year</span>
          </div>
          <div className="flex h-[34px] items-center pl-5">
            <HashIcon />
            <span className="ml-[12px]">total_results_db</span>
          </div>
        </div>
        <div className="relative mt-[43px] flex items-center gap-2 text-[12px] font-semibold">
          <span className="flex h-8 w-36 shrink-0 items-center justify-center rounded bg-[#e9f6f9] text-[#1a85a0]">
            Close
          </span>
          <span className="flex h-8 w-36 shrink-0 items-center justify-center rounded bg-[#e0e0e0] text-[#666]">
            Save
          </span>
          <svg
            width="13"
            height="13"
            viewBox="0 0 13 13"
            fill="none"
            stroke="#8c8c8c"
            strokeWidth="2"
            className="-mb-[13px] ml-3 shrink-0"
          >
            <path d="M1 4V1h3M9 1h3v3M12 9v3H9M4 12H1V9" />
          </svg>
        </div>
      </div>
    </div>
  );
}

/* ---------- taskbar ---------- */

function TaskItem({ children, dot = false, active = false }: { children: React.ReactNode; dot?: boolean; active?: boolean }) {
  return (
    <div
      className={
        active
          ? "relative mx-[2.5px] flex h-[50px] w-[50px] items-center justify-center rounded-md border border-[#343743] bg-[#2c2f3b]"
          : "relative mx-[2.5px] flex h-[50px] w-[50px] items-center justify-center"
      }
    >
      {children}
      {dot && <span className="absolute bottom-[1px] h-[4px] w-[8px] rounded-full bg-[#9a9ca3]" />}
      {active && <span className="absolute bottom-0 h-[4px] w-5 rounded-full bg-[#4cc2ff]" />}
    </div>
  );
}

function Taskbar() {
  return (
    <div className={"flex h-[59px] items-center border-t border-[#3b3e49] bg-[#1d202c] text-white " + SEGOE}>
      <div className="relative ml-6 h-[34px] w-[40px]">
        <svg width="32" height="34" viewBox="0 0 32 34">
          <circle cx="12" cy="16" r="9" fill="#f5a623" />
          <path d="M7 31a6.500 6.500 0 0 1-.5-13A9 9 0 0 1 23 17a7 7 0 0 1 2 14Z" fill="#cfdcf5" />
          <path d="M7 31a6.500 6.500 0 0 1-5-9c6 4 18 5 29 1a7 7 0 0 1-6 8Z" fill="#a9c0ec" />
        </svg>
        <span className="absolute left-[15px] top-[-5px] flex h-[19px] w-[19px] items-center justify-center rounded-full bg-[#e0605c] text-[12px] text-[#1d202c]">
          3
        </span>
      </div>
      <div className="flex w-[120px] flex-col whitespace-nowrap text-[14.5px] leading-5 tracking-[0.1px]">
        <span>2°C</span>
        <span className="text-[#c9cad0]">Mostly cloudy</span>
      </div>
      <div className="ml-[401px] grid h-[29px] w-[29px] grid-cols-2 gap-[1px]">
        <span className="bg-[#7ddcff]" />
        <span className="bg-[#4fcaff]" />
        <span className="bg-[#41c0ff]" />
        <span className="bg-[#169bff]" />
      </div>
      <div className="ml-[17px] flex h-10 w-[275px] items-center rounded-full border border-[#43464f] border-t-[#62656f] bg-[#3d3f4b] pl-[13px]">
        <Search size={21} color="#f0f0f0" strokeWidth={2} />
        <span className="ml-[11px] mt-px text-[16.5px] tracking-[-0.2px] text-[#d8d9dd]">Search</span>
      </div>
      <div className="ml-[2px] flex items-center">
        <TaskItem>
          <svg width="30" height="28" viewBox="0 0 30 28">
            <rect x="8" y="0" width="22" height="20" rx="1" fill="#f3f3f3" />
            <rect x="0" y="8" width="22" height="20" rx="1" fill="#6a6a6a" />
            <rect x="8" y="8" width="14" height="12" fill="#a6a6a6" />
          </svg>
        </TaskItem>
        <TaskItem dot><Folder /></TaskItem>
        <TaskItem dot><FaSpotify size={28} color="#1ed760" /></TaskItem>
        <TaskItem><Obsidian /></TaskItem>
        <TaskItem dot><VsCode /></TaskItem>
        <TaskItem active>
          <ChromeColor />
          <span className="absolute right-[3px] top-[4px] flex h-[19px] w-[19px] items-center justify-center rounded-full bg-[#f4511e] text-[12px]">
            T
          </span>
        </TaskItem>
        <TaskItem>
          <span className="flex h-7 w-7 items-center justify-center rounded-full bg-[#229ed9]">
            <FaTelegramPlane size={16} color="#fff" className="-ml-[2px]" />
          </span>
        </TaskItem>
        <TaskItem dot>
          <span className="flex h-[30px] w-[30px] items-center justify-center rounded-full bg-[#1d8cf0]">
            <FaDocker size={21} color="#fff" />
          </span>
        </TaskItem>
      </div>
      <div className="ml-auto flex items-center pr-[23px]">
        <ChevronUp size={20} color="#fff" strokeWidth={2} />
        <CloudOff size={21} color="#b5b6bb" strokeWidth={1.8} className="ml-[20px]" />
        <span className="ml-[22px] w-[31px] text-[14px]">ENG</span>
        <Wifi size={21} color="#fff" strokeWidth={1.9} className="ml-[20px]" />
        <Volume2 size={20} color="#fff" strokeWidth={1.5} className="ml-[8px]" />
        <svg width="22" height="18" viewBox="0 0 22 18" className="ml-[11px]">
          <rect x="3" y="4" width="15" height="11" rx="3" fill="none" stroke="#fff" strokeWidth="1.5" />
          <rect x="5.500" y="6.500" width="10" height="6" rx="1" fill="#fff" />
          <path d="M19.500 8v3" stroke="#fff" strokeWidth="1.8" />
          <path d="M1 1.500h4v4H1Z" fill="#fff" />
        </svg>
        <div className="ml-[13px] flex w-[84px] flex-col text-right text-[14.5px] leading-5 tracking-[0.05px]">
          <span>21:11</span>
          <span>16/10/2025</span>
        </div>
      </div>
    </div>
  );
}

/* ---------- page ---------- */

export default function App() {
  return (
    <div className="relative flex h-[1079px] w-[1919px] flex-col overflow-hidden bg-white font-['Inter',sans-serif]">
      <TabStrip />
      <AddressBar />
      <Navbar />
      <TitleBar />
      <div className="flex h-[794px]">
        <SourcePanel />
        <ControlPanel />
        <ChartArea />
      </div>
      <Taskbar />
      <MetricPopover />
      <div className={"pointer-events-none absolute left-[1554px] top-[915px] text-[#b6b6b6] opacity-90 " + SEGOE}>
        <div className="whitespace-nowrap text-[24px] leading-8">Activate Windows</div>
        <div className="whitespace-nowrap text-[18px] leading-[28px] tracking-[-0.3px]">
          Go to Settings to activate Windows.
        </div>
      </div>
    </div>
  );
}
